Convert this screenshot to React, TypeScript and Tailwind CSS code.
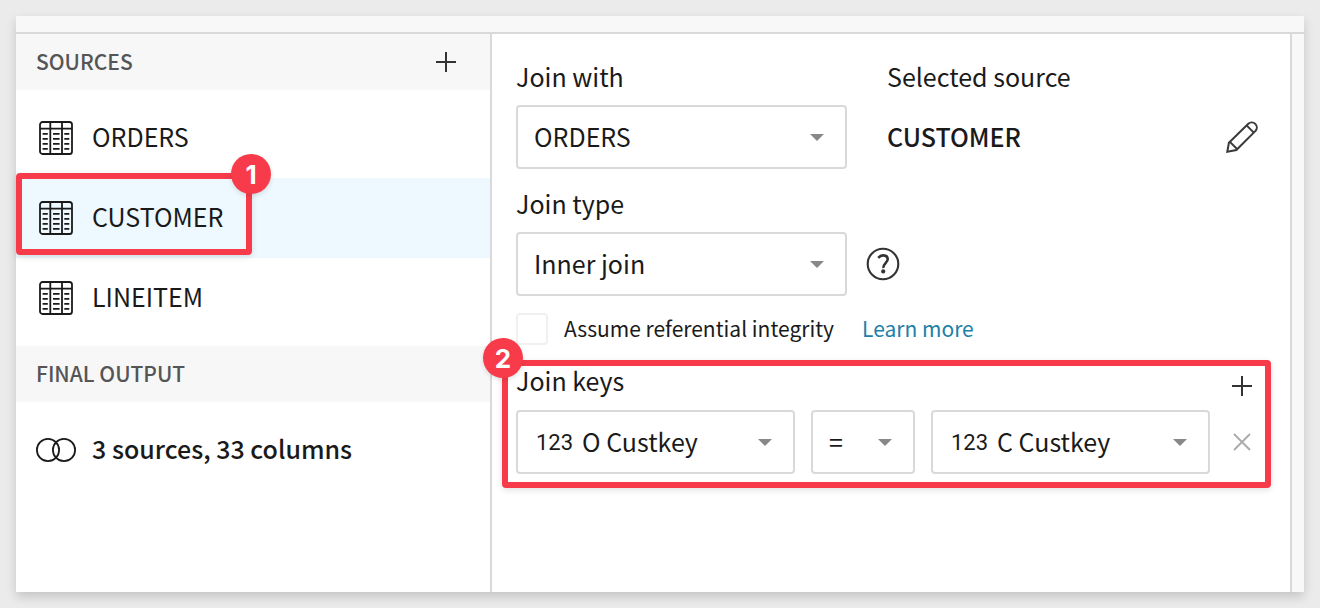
import type { ReactNode } from "react";

const bodyFont = "font-['Noto_Sans_CJK_SC','Noto_Sans_CJK_JP',sans-serif]";

function TableIcon() {
  return (
    <svg viewBox="0 0 34 34" className="size-[34px] shrink-0" fill="none" stroke="#1a1a1a" strokeWidth="1.8" aria-hidden="true">
      <rect x="1" y="1" width="32" height="32" rx="2.6" />
      <path d="M1 7.6H33M11.3 1V33M23 1V33" />
      <path d="M3.6 12.8h5.2M3.6 17.8h5.2M3.6 22.8h5.2M3.6 27.8h5.2M14 12.8h6.6M14 17.8h6.6M14 22.8h6.6M14 27.8h6.6M25.3 12.8h5M25.3 17.8h5M25.3 22.8h5M25.3 27.8h5" />
    </svg>
  );
}

function JoinIcon() {
  return (
    <svg viewBox="0 0 40 24" className="h-6 w-10 shrink-0" fill="none" stroke="#1a1a1a" strokeWidth="1.8" aria-hidden="true">
      <circle cx="12" cy="12" r="11.1" />
      <circle cx="28" cy="12" r="11.1" />
    </svg>
  );
}

function PlusIcon() {
  return (
    <svg viewBox="0 0 20 20" className="size-5" stroke="#333" strokeWidth="2" aria-hidden="true">
      <path d="M10 0V20M0 10H20" />
    </svg>
  );
}

function CloseIcon() {
  return (
    <svg viewBox="0 0 18 18" className="size-[18px]" stroke="#aaa" strokeWidth="1.8" aria-hidden="true">
      <path d="M1 1L17 17M17 1L1 17" />
    </svg>
  );
}

function PencilIcon() {
  return (
    <svg viewBox="0 0 32 32" className="size-8" fill="none" stroke="#3a3a3a" strokeWidth="2" strokeLinejoin="miter" aria-hidden="true">
      <path d="M1.3 30.7L2.9 21.8L22.3 2.7A5.1 5.1 0 0 1 29.5 9.9L10.4 29Z" />
      <path d="M3.9 20.9L11.3 28.3M20.6 4.4L27.8 11.6" />
    </svg>
  );
}

function HelpIcon() {
  return (
    <svg viewBox="0 0 34 34" className="size-[34px]" fill="none" stroke="#333" aria-hidden="true">
      <circle cx="17" cy="17" r="15.3" strokeWidth="2.1" />
      <path d="M12.2 10.8C13.6 9.2 15.2 8.4 17.2 8.4C20 8.4 21.7 10 21.7 12.3C21.7 15.8 16.8 16.7 17.3 21" strokeWidth="2.6" />
      <circle cx="17.2" cy="24.4" r="2.1" fill="#333" stroke="none" />
    </svg>
  );
}

type SelectBoxProps = {
  id: string;
  label?: string;
  value: string;
  options: string[];
  numeric?: boolean;
};

function SelectBox({ id, label, value, options, numeric }: SelectBoxProps) {
  return (
    <div className="grid h-16 w-full items-center">
      <select
        id={id}
        aria-label={label}
        defaultValue={value}
        className={`col-start-1 row-start-1 h-full w-full appearance-none rounded-[4px] border-2 border-[#d9d9d9] bg-white pr-12 text-[25px] text-[#1a1a1a] ${
          numeric ? "pl-16" : "pl-4"
        }`}
      >
        {options.map((o) => (
          <option key={o}>{o}</option>
        ))}
      </select>
      {numeric && (
        <span className="pointer-events-none col-start-1 row-start-1 ml-5 justify-self-start font-[Roboto,sans-serif] text-[22px] text-[#1a1a1a]">
          123
        </span>
      )}
      <svg
        viewBox="0 0 14 7"
        className="pointer-events-none col-start-1 row-start-1 mr-[23px] h-[7px] w-[14px] justify-self-end"
        aria-hidden="true"
      >
        <path d="M0 0H14L7 7Z" fill="#888" />
      </svg>
    </div>
  );
}

function Badge({ children, className }: { children: ReactNode; className: string }) {
  return (
    <span
      className={`absolute flex size-10 items-center justify-center rounded-full bg-[#f83b4a] font-[Inter,sans-serif] text-[26px] font-bold text-white shadow-[0_2px_5px_rgba(0,0,0,0.12)] ${className}`}
    >
      {children}
    </span>
  );
}

const sources = ["ORDERS", "CUSTOMER", "LINEITEM"];

function SectionHeader({ title, children }: { title: string; children?: ReactNode }) {
  return (
    <div className="flex h-14 items-center justify-between bg-[#f7f7f7] pr-6 pl-5">
      <h2 className="text-[21px] font-medium text-[#555]">{title}</h2>
      {children}
    </div>
  );
}

function Sidebar() {
  return (
    <aside className="flex w-[476px] shrink-0 flex-col border-r-2 border-[#d9d9d9]">
      <SectionHeader title="SOURCES">
        <button type="button" aria-label="Add source" className="flex size-10 items-center justify-center">
          <PlusIcon />
        </button>
      </SectionHeader>
      <ul className="py-2">
        {sources.map((name) => (
          <li key={name} className="relative">
            <button
              type="button"
              className={`flex h-20 w-full items-center gap-[19px] pl-[23px] text-[25px] ${name === "CUSTOMER" ? "bg-[#edf8ff]" : ""}`}
            >
              <TableIcon />
              <span className="pb-[2px]">{name}</span>
            </button>
            {name === "CUSTOMER" && (
              <span className="pointer-events-none absolute -top-[5px] left-0 h-[82px] w-[236px] rounded-[4px] border-6 border-[#f83b4a] shadow-[0_2px_6px_rgba(0,0,0,0.12)]">
                <Badge className="-top-[25px] -right-[25px]">1</Badge>
              </span>
            )}
          </li>
        ))}
      </ul>
      <SectionHeader title="FINAL OUTPUT" />
      <div className="py-2">
        <button type="button" className="flex h-20 w-full items-center gap-4 pl-5 text-[25px] font-medium">
          <JoinIcon />
          <span className="pb-[2px]">3 sources, 33 columns</span>
        </button>
      </div>
    </aside>
  );
}

function JoinPanel() {
  return (
    <main className="min-w-0 flex-1 pt-7 pr-8 pl-6">
      <div className="grid grid-cols-[331fr_371fr] gap-x-10">
        <div>
          <label htmlFor="join-with" className="mb-[15px] block h-7 text-[25px] leading-7">
            Join with
          </label>
          <SelectBox id="join-with" value="ORDERS" options={["ORDERS", "LINEITEM"]} />
        </div>
        <div>
          <h3 className="mb-[15px] h-7 text-[25px] leading-7">Selected source</h3>
          <div className="flex h-16 items-center justify-between">
            <span className="text-[25px] font-medium">CUSTOMER</span>
            <button type="button" aria-label="Edit source">
              <PencilIcon />
            </button>
          </div>
        </div>
        <div className="mt-5">
          <label htmlFor="join-type" className="mb-[15px] block h-7 text-[25px] leading-7">
            Join type
          </label>
          <SelectBox id="join-type" value="Inner join" options={["Inner join", "Left outer join", "Right outer join", "Full outer join"]} />
        </div>
        <div className="-ml-[21px] flex h-16 items-center self-end">
          <button type="button" aria-label="About join types">
            <HelpIcon />
          </button>
        </div>
      </div>

      <div className="mt-[17px] flex h-8 items-center text-[21px] leading-7">
        <input
          id="integrity"
          type="checkbox"
          className="size-8 shrink-0 appearance-none rounded-[4px] border-2 border-[#f0f0f0] bg-white checked:bg-[#1f7fa8]"
        />
        <label htmlFor="integrity" className="pb-[2px] pl-4">
          Assume referential integrity
        </label>
        <a href="#integrity" className="pb-[2px] pl-7 text-[#2180a8]">
          Learn more
        </a>
      </div>

      <section className="relative mt-5">
        <div className="mb-[11px] flex h-[34px] items-start justify-between">
          <h3 className="text-[25px] leading-[30px]">Join keys</h3>
          <button type="button" aria-label="Add join key" className="flex h-[42px] w-8 items-center justify-center">
            <PlusIcon />
          </button>
        </div>
        <div className="flex items-center gap-4">
          <div className="flex-1">
            <SelectBox id="left-key" label="Left key" value="O Custkey" options={["O Custkey", "O Orderkey"]} numeric />
          </div>
          <div className="w-26">
            <SelectBox id="operator" label="Operator" value="=" options={["=", "≠", "<", ">"]} />
          </div>
          <div className="flex-1">
            <SelectBox id="right-key" label="Right key" value="C Custkey" options={["C Custkey", "C Nationkey"]} numeric />
          </div>
          <button type="button" aria-label="Remove join key" className="flex size-8 items-center justify-center">
            <CloseIcon />
          </button>
        </div>
        <div className="pointer-events-none absolute -top-[5px] -right-[13px] -bottom-[14px] -left-[14px] rounded-[4px] border-6 border-[#f83b4a] shadow-[0_2px_6px_rgba(0,0,0,0.12)]">
          <Badge className="-top-[28px] -left-[25px]">2</Badge>
        </div>
      </section>
    </main>
  );
}

export default function App() {
  return (
    <div className={`flex min-h-screen bg-[#ebebeb] p-4 text-[#1a1a1a] ${bodyFont}`}>
      <div className="flex flex-1 flex-col bg-[#f8f8f8] shadow-[0_5px_10px_rgba(0,0,0,0.16)]">
        <div className="h-[18px] border-b-2 border-[#d9d9d9]" />
        <div className="flex flex-1">
          <div className="flex flex-1 border-r-2 border-[#d9d9d9] bg-white">
            <Sidebar />
            <JoinPanel />
          </div>
          <div className="w-3" />
        </div>
      </div>
    </div>
  );
}
